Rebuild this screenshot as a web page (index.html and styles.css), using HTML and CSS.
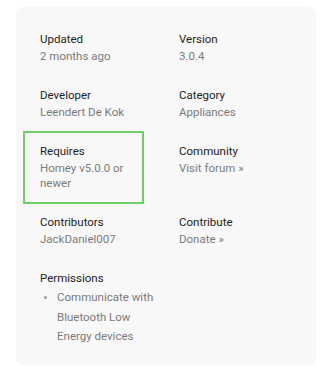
FILE: index.html
```html
<!DOCTYPE html>
<html lang="en">
<head>
  <meta charset="UTF-8" />
  <meta name="viewport" content="width=device-width, initial-scale=1" />
  <title>App details</title>
  <link rel="stylesheet" href="styles.css">
</head>
<body>
  <div class="card">
    <div class="info-grid">
      <div class="info">
        <div class="label">Updated</div>
        <div class="value">2 months ago</div>
      </div>
      <div class="info">
        <div class="label">Version</div>
        <div class="value">3.0.4</div>
      </div>

      <div class="info">
        <div class="label">Developer</div>
        <div class="value">Leendert De Kok</div>
      </div>
      <div class="info">
        <div class="label">Category</div>
        <div class="value">Appliances</div>
      </div>

      <!-- highlighted requirement -->
      <div class="info highlighted">
        <div class="label">Requires</div>
        <div class="value">Homey v5.0.0 or newer</div>
        <span class="highlight"></span>
      </div>
      <div class="info">
        <div class="label">Community</div>
        <div class="value">Visit forum »</div>
      </div>

      <div class="info">
        <div class="label">Contributors</div>
        <div class="value">JackDaniel007</div>
      </div>
      <div class="info">
        <div class="label">Contribute</div>
        <div class="value">Donate »</div>
      </div>

      <div class="info permissions">
        <div class="label">Permissions</div>
        <ul>
          <li>Communicate with<br>Bluetooth Low<br>Energy devices</li>
        </ul>
      </div>
    </div>
  </div>
</body>
</html>
```

FILE: styles.css
```css
body {
  margin: 0;
  padding: 7px 16px;
  background: #fff;
  font-family: Roboto, 'Liberation Sans', sans-serif;
  font-size: 11.5px;
}
.card {
  background: #f8f8f8;
  border-radius: 8px;
  padding: 23px 24px 26px;
  height: 359px;
  box-sizing: border-box;
}
.info-grid {
  display: grid;
  grid-template-columns: 113px 1fr;
  column-gap: 26px;
  row-gap: 22px;
}
.label {
  color: #222;
  line-height: 18px;
  margin-bottom: 1px;
}
.value {
  color: #7b7b7b;
  line-height: 15px;
}
.highlighted {
  position: relative;
}
.highlight {
  position: absolute;
  top: -11px;
  left: -17px;
  width: 121px;
  height: 73px;
  border: 2px solid #6dcf68;
  box-sizing: border-box;
}
.permissions {
  grid-column: 1 / -1;
}
.permissions ul {
  margin: 0;
  padding: 0 0 0 17px;
  list-style: none;
}
.permissions li {
  position: relative;
  color: #7b7b7b;
  line-height: 19.5px;
}
.permissions li::before {
  content: "";
  position: absolute;
  left: -13px;
  top: 8px;
  width: 3px;
  height: 3px;
  border-radius: 50%;
  background: #9a9a9a;
}
```
